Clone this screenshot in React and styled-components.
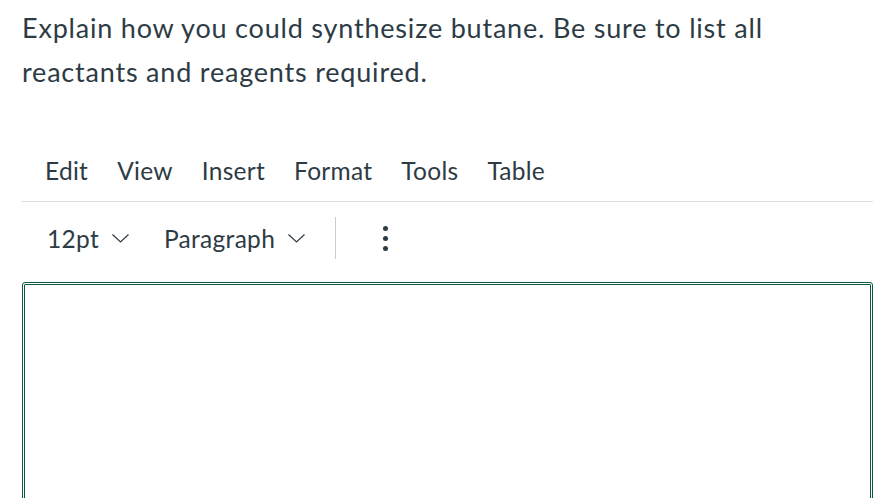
import React from 'react';
import styled, { createGlobalStyle } from 'styled-components';

const GlobalStyle = createGlobalStyle`
  html, body {
    margin: 0;
    padding: 0;
    background: #ffffff;
  }
  body {
    font-family: Lato, "Open Sans", sans-serif;
    color: #2d3b45;
    overflow: hidden;
  }
`;

const Page = styled.div`
  padding: 0 19px 0 22px;
`;

const Question = styled.p`
  margin: 0;
  padding-top: 6px;
  font-size: 27px;
  line-height: 44px;
  letter-spacing: 0.8px;
`;

const Editor = styled.div`
  margin-top: 46px;
`;

const MenuBar = styled.div`
  display: flex;
  align-items: center;
  height: 61px;
  padding-left: 13px;
  border-bottom: 1px solid #dcdcdc;
`;

const MenuItem = styled.span`
  font-size: 24.5px;
  letter-spacing: 0.28px;
  padding: 0 10px;
  margin-right: 9px;
`;

const ToolBar = styled.div`
  display: flex;
  align-items: center;
  height: 72px;
  padding-left: 25px;
`;

const Select = styled.div`
  display: flex;
  align-items: center;
  gap: 13px;
  font-size: 24.5px;
  letter-spacing: 0.3px;
  margin-right: ${({ space }) => space}px;
`;

const Divider = styled.div`
  width: 1px;
  height: 42px;
  background: #c7cdd1;
  margin-right: 47px;
`;

const More = styled.div`
  display: flex;
  flex-direction: column;
  gap: 5px;
  span {
    width: 5px;
    height: 5px;
    border-radius: 50%;
    background: #2d3b45;
  }
`;

const Body = styled.div`
  margin-top: 8px;
  height: 260px;
  border: 3px double #0b5a3c;
  border-radius: 3px 3px 0 0;
  box-sizing: border-box;
`;

const Chevron = () => (
  <svg width="17" height="9" viewBox="0 0 17 9" fill="none">
    <path d="M0.5 0.5 L8.5 8 L16.5 0.5" stroke="#2d3b45" strokeWidth="1.2" />
  </svg>
);

const menus = ['Edit', 'View', 'Insert', 'Format', 'Tools', 'Table'];

const App = () => (
  <>
    <GlobalStyle />
    <Page>
      <Question>
        Explain how you could synthesize butane. Be sure to list all reactants and reagents required.
      </Question>
      <Editor>
        <MenuBar>
          {menus.map((m) => (
            <MenuItem key={m}>{m}</MenuItem>
          ))}
        </MenuBar>
        <ToolBar>
          <Select space={35}>
            12pt
            <Chevron />
          </Select>
          <Select space={30}>
            Paragraph
            <Chevron />
          </Select>
          <Divider />
          <More>
            <span />
            <span />
            <span />
          </More>
        </ToolBar>
        <Body />
      </Editor>
    </Page>
  </>
);

export default App;
